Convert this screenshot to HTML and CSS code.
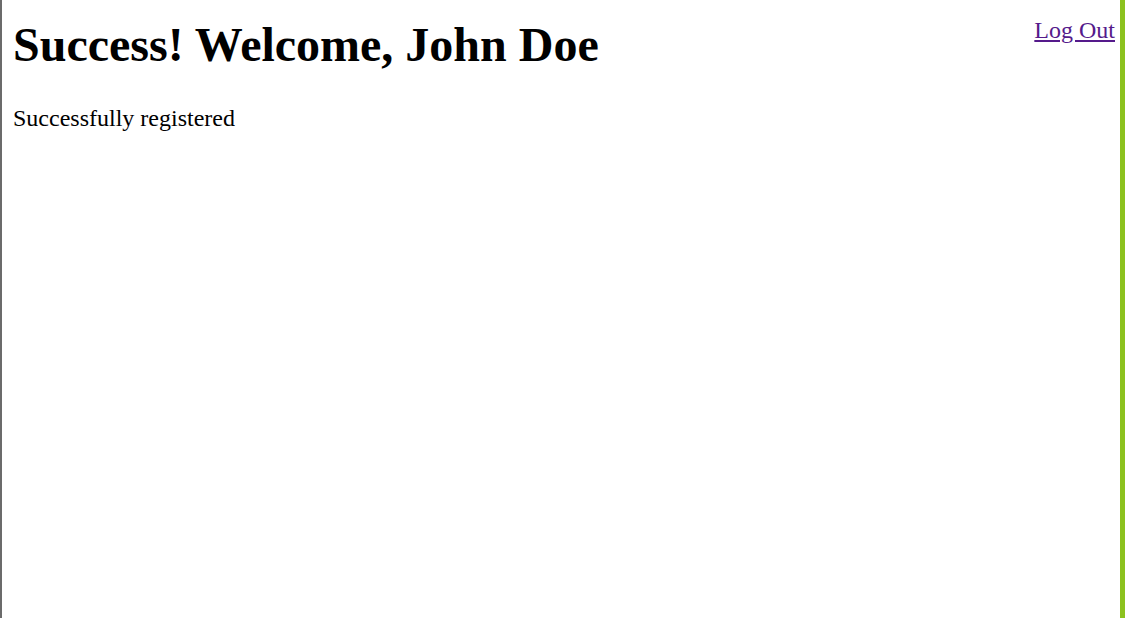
FILE: index.html
```html
<!DOCTYPE html>
<html lang="en">
<head>
<meta charset="utf-8">
<title>Success</title>
<link rel="stylesheet" href="styles.css">
</head>
<body>
<div class="page">
  <div class="header">
    <h1 class="title">Success! Welcome, John Doe</h1>
    <a class="logout" href="#">Log Out</a>
  </div>
  <p class="message">Successfully registered</p>
</div>
</body>
</html>
```

FILE: styles.css
```css
html, body {
  margin: 0;
  padding: 0;
  height: 100%;
  background: #ffffff;
}
.page {
  box-sizing: border-box;
  min-height: 100vh;
  border-left: 2px solid #6b6b6b;
  border-right: 5px solid #8cc21f;
  padding: 17px 5px 0 11px;
  font-family: "Liberation Serif", "Times New Roman", serif;
  color: #000;
}
.header {
  display: flex;
  justify-content: space-between;
  align-items: flex-start;
}
.title {
  margin: 0 0 33px 0;
  font-size: 48px;
  font-weight: bold;
  line-height: normal;
}
.logout {
  font-size: 24px;
  color: #551a8b;
  text-decoration: underline;
}
.message {
  margin: 0;
  font-size: 24px;
}
```
